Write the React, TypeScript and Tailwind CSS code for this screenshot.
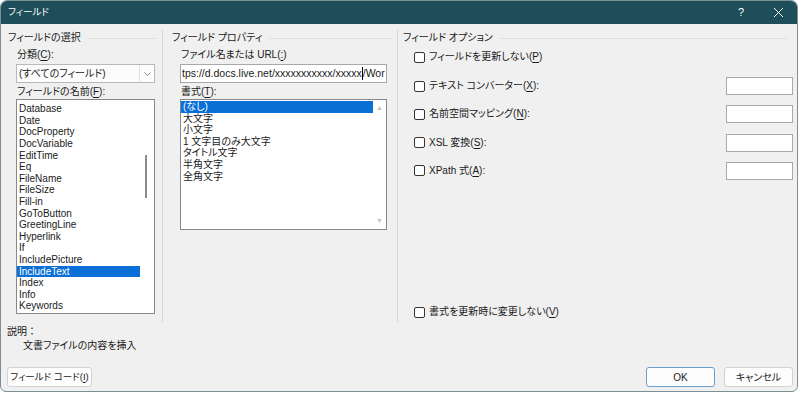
import React from "react";

const leftItems = [
  "Database",
  "Date",
  "DocProperty",
  "DocVariable",
  "EditTime",
  "Eq",
  "FileName",
  "FileSize",
  "Fill-in",
  "GoToButton",
  "GreetingLine",
  "Hyperlink",
  "If",
  "IncludePicture",
  "IncludeText",
  "Index",
  "Info",
  "Keywords",
];

const formats = ["(なし)", "大文字", "小文字", "1 文字目のみ大文字", "タイトル文字", "半角文字", "全角文字"];

const GroupHeader = ({ title }: { title: string }) => (
  <div className="flex h-[14px] items-center">
    <span className="leading-[14px]">{title}</span>
    <div className="ml-[7px] mr-[6px] h-px flex-1 bg-[#dedede]" />
  </div>
);

const Accel = ({ pre, k, post = "" }: { pre: string; k: string; post?: string }) => (
  <span className="whitespace-nowrap leading-[14px]">
    {pre}(<u className="underline-offset-2">{k}</u>){post}
  </span>
);

const CheckBox = () => (
  <div className="h-[11px] w-[11px] shrink-0 rounded-[2px] border border-[#333] bg-white" />
);

const OptionRow = ({ label, k, box }: { label: string; k: string; box?: boolean }) => (
  <div className="flex h-[18px] items-center justify-between">
    <div className="flex items-center gap-[4px]">
      <CheckBox />
      <Accel pre={label} k={k} post={box ? ":" : ""} />
    </div>
    {box && <div className="h-[18px] w-[67px] border border-[#a8a8a8] bg-white" />}
  </div>
);

const Button = ({ children, primary }: { children: React.ReactNode; primary?: boolean }) => (
  <div
    className={
      "flex h-[20px] w-[69px] items-center justify-center rounded-[3px] border " +
      (primary ? "border-[#6a9fce] bg-[#fdfdfd]" : "border-[#d2d2d2] bg-[#fdfdfd]")
    }
  >
    {children}
  </div>
);

export default function App() {
  return (
    <div className="h-[395px] w-[800px] bg-white font-['Liberation_Sans','Noto_Sans_CJK_JP',sans-serif] text-[10px] text-[#1a1a1a] [font-feature-settings:'palt']">
      <div className="flex h-[392px] w-[798px] flex-col overflow-hidden rounded-t-[7px] rounded-b-[6px] border border-[#7c8f95] bg-[#f0f0f0]">
        {/* title bar */}
        <div className="flex h-[23px] shrink-0 items-center bg-[#1e4e59] pl-[7px] text-white">
          <span className="text-[9.5px]">フィールド</span>
          <span className="ml-auto mr-[29px] text-[11px]">?</span>
          <svg width="11" height="11" viewBox="0 0 11 11" className="mr-[13px]">
            <path d="M1 1 L10 10 M10 1 L1 10" stroke="#fff" strokeWidth="1" />
          </svg>
        </div>

        {/* three groups */}
        <div className="flex h-[298px] shrink-0">
          {/* left */}
          <div className="flex w-[161px] shrink-0 flex-col pl-[7px] pt-[7px]">
            <GroupHeader title="フィールドの選択" />
            <div className="ml-[9px] mt-[3px] flex h-[14px] items-center">
              <Accel pre="分類" k="C" post=":" />
            </div>
            <div className="ml-[8px] mt-[2px] flex h-[19px] w-[139px] items-center border border-[#b9b9b9] bg-[#fcfcfc]">
              <span className="flex-1 pl-[2px]">(すべてのフィールド)</span>
              <div className="flex h-full w-[15px] items-center justify-center border-l border-[#e2e2e2]">
                <svg width="7" height="4" viewBox="0 0 7 4">
                  <path d="M0.5 0.5 L3.5 3.5 L6.5 0.5" stroke="#888" fill="none" strokeWidth="1" />
                </svg>
              </div>
            </div>
            <div className="ml-[9px] mt-[2px] flex h-[14px] items-center">
              <Accel pre="フィールドの名前" k="F" post=":" />
            </div>
            <div className="ml-[8px] flex h-[215px] w-[139px] border border-[#828790] bg-white">
              <div className="flex-1 pt-[3.2px]">
                {leftItems.map((it) => (
                  <div
                    key={it}
                    className={
                      "h-[11.6px] pl-[2px] leading-[11.6px] " +
                      (it === "IncludeText" ? "bg-[#0a6fd6] text-white" : "")
                    }
                  >
                    {it}
                  </div>
                ))}
              </div>
              <div className="w-[14px] pt-[55px]">
                <div className="ml-[5px] h-[43px] w-[2px] bg-[#8c8c8c]" />
              </div>
            </div>
          </div>

          {/* middle */}
          <div className="flex w-[235px] shrink-0 flex-col pt-[6px]">
            <div className="flex h-full flex-col border-l border-[#d4d4d4]">
              <div className="mt-[1px] pl-[9px]">
                <GroupHeader title="フィールド プロパティ" />
              </div>
              <div className="ml-[18px] mt-[3px] flex h-[14px] items-center">
                <Accel pre="ファイル名または URL" k=":" />
              </div>
              <div className="ml-[17px] mt-[2px] flex h-[19px] w-[207px] items-center overflow-hidden whitespace-nowrap border border-[#a8a8a8] bg-white pl-[1px] text-[10.5px]">
                <span>tps://d.docs.live.net/xxxxxxxxxxx/xxxxx</span>
                <span className="inline-block h-[13px] w-px shrink-0 bg-[#000]" />
                <span>/Wor</span>
              </div>
              <div className="ml-[18px] mt-[2px] flex h-[14px] items-center">
                <Accel pre="書式" k="T" post=":" />
              </div>
              <div className="ml-[17px] flex h-[131px] w-[207px] border border-[#828790] bg-white">
                <div className="flex-1 pt-[1px]">
                  {formats.map((f, i) => (
                    <div
                      key={f}
                      className={
                        "h-[11.6px] pl-[2px] leading-[11.6px] " + (i === 0 ? "bg-[#0a6fd6] text-white" : "")
                      }
                    >
                      {f}
                    </div>
                  ))}
                </div>
                <div className="flex w-[13px] flex-col items-center justify-between py-[4px] text-[7px] leading-[8px] text-[#c2c2c2]">
                  <span>▲</span>
                  <span>▼</span>
                </div>
              </div>
            </div>
          </div>

          {/* right */}
          <div className="flex flex-1 flex-col pt-[6px]">
            <div className="flex h-full flex-col border-l border-[#d4d4d4] pr-[4px]">
              <div className="mt-[1px] pl-[5px]">
                <GroupHeader title="フィールド オプション" />
              </div>
              <div className="ml-[16px] mt-[5px] flex h-[14px] items-center gap-[4px]">
                <CheckBox />
                <Accel pre="フィールドを更新しない" k="P" />
              </div>
              <div className="ml-[16px] mt-[13px] flex flex-col gap-[10.3px]">
                <OptionRow label="テキスト コンバーター" k="X" box />
                <OptionRow label="名前空間マッピング" k="N" box />
                <OptionRow label="XSL 変換" k="S" box />
                <OptionRow label="XPath 式" k="A" box />
              </div>
              <div className="mb-[3px] ml-[16px] mt-auto flex h-[14px] items-center gap-[4px]">
                <CheckBox />
                <Accel pre="書式を更新時に変更しない" k="V" />
              </div>
            </div>
          </div>
        </div>

        {/* bottom */}
        <div className="flex flex-1 flex-col">
          <div className="mt-[3px] h-[14px] pl-[6px] leading-[14px] [font-feature-settings:normal]">説明：</div>
          <div className="h-[14px] pl-[22px] leading-[14px]">文書ファイルの内容を挿入</div>
          <div className="mt-[14px] flex items-center pl-[6px] pr-[4px]">
            <div className="flex h-[20px] w-[85px] items-center justify-center rounded-[3px] border border-[#d2d2d2] bg-[#fdfdfd] text-[9.5px]">
              <Accel pre="フィールド コード" k="I" />
            </div>
            <div className="ml-auto flex gap-[9px]">
              <Button primary>OK</Button>
              <Button>キャンセル</Button>
            </div>
          </div>
        </div>
      </div>
    </div>
  );
}
